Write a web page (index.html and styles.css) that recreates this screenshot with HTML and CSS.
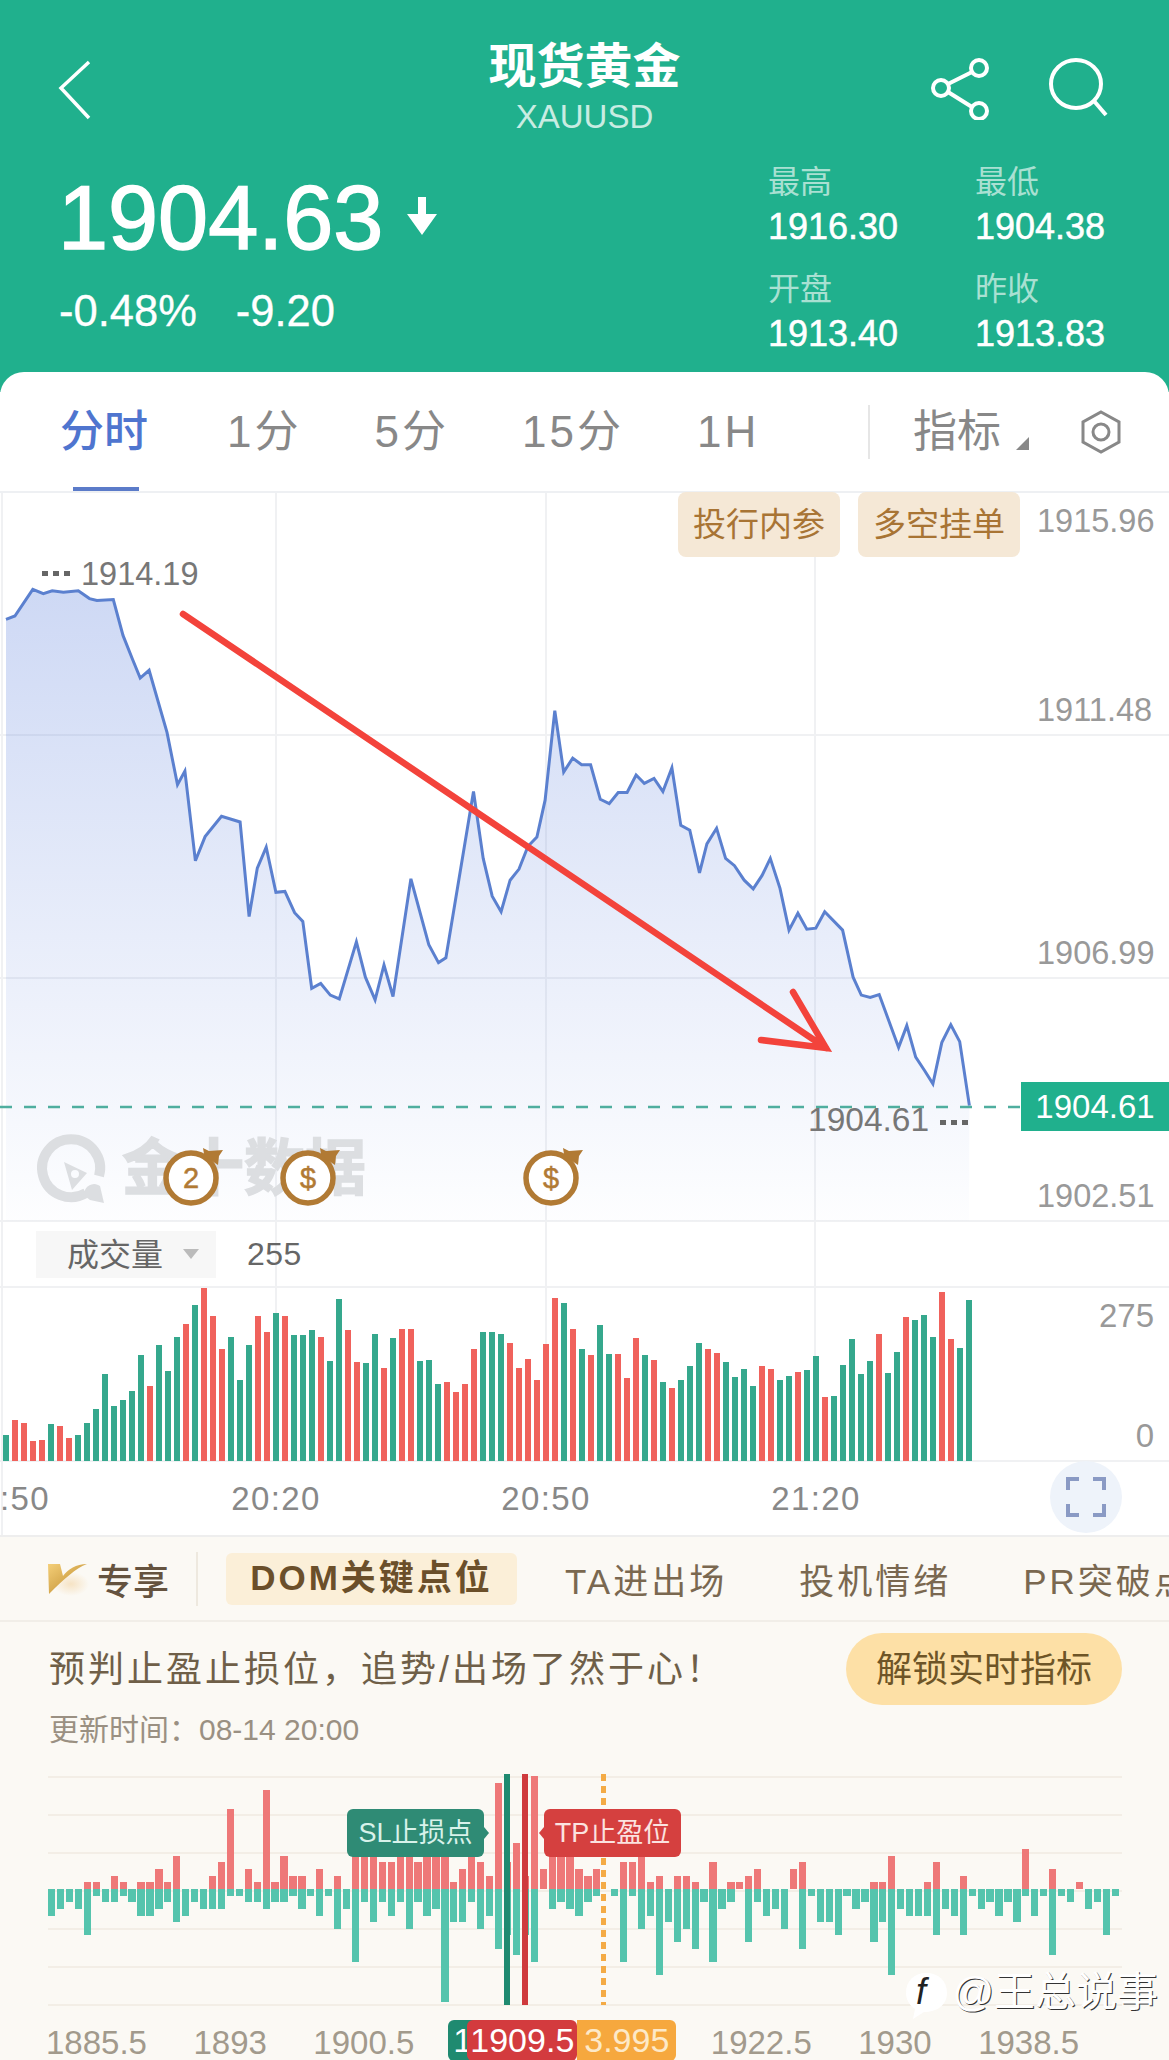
FILE: index.html
```html
<!DOCTYPE html>
<html lang="zh-CN">
<head>
    <meta charset="UTF-8">
    <title>现货黄金 XAUUSD</title>
    <link rel="stylesheet" href="styles.css">
</head>
<body>

<div class="page">
    <!-- Cabecalho verde -->
    <header class="header">
        <div class="topbar">
            <svg class="icon-back" width="40" height="64" viewBox="0 0 40 64"><path d="M34 4 L6 30 L34 60" /></svg>
            <div class="title-box">
                <div class="title">现货黄金</div>
                <div class="symbol">XAUUSD</div>
            </div>
            <div class="top-icons">
                <svg width="64" height="64" viewBox="0 0 64 64">
                    <circle cx="49" cy="12" r="8" />
                    <circle cx="11" cy="32" r="8" />
                    <circle cx="49" cy="55" r="8" />
                    <path d="M18 28 L42 16 M18 36 L42 51" />
                </svg>
                <svg width="64" height="64" viewBox="0 0 64 64">
                    <ellipse cx="28" cy="28" rx="25" ry="24" />
                    <path d="M46 45 L58 59" />
                </svg>
            </div>
        </div>
        <div class="quote">
            <div class="quote-left">
                <div class="price-row">
                    <span class="price">1904.63</span>
                    <svg class="price-arrow" width="30" height="38" viewBox="0 0 30 38"><path d="M11 0 H19 V17 H30 L15 38 L0 17 H11 Z" /></svg>
                </div>
                <div class="change-row">
                    <span>-0.48%</span>
                    <span>-9.20</span>
                </div>
            </div>
            <div class="stats">
                <div><div class="stat-label">最高</div><div class="stat-value">1916.30</div></div>
                <div><div class="stat-label">最低</div><div class="stat-value">1904.38</div></div>
                <div><div class="stat-label">开盘</div><div class="stat-value">1913.40</div></div>
                <div><div class="stat-label">昨收</div><div class="stat-value">1913.83</div></div>
            </div>
        </div>
    </header>

    <!-- Abas de periodo -->
    <section class="sheet">
        <nav class="tabs">
            <span class="tab tab-active">分时</span>
            <span class="tab">1分</span>
            <span class="tab">5分</span>
            <span class="tab">15分</span>
            <span class="tab">1H</span>
            <div class="tabs-right">
                <span class="tab-sep"></span>
                <span class="tab tab-ind">指标</span>
                <span class="tab-caret"></span>
                <svg class="icon-hex" width="42" height="44" viewBox="0 0 42 44">
                    <path d="M21 2 L39 12 V32 L21 42 L3 32 V12 Z" />
                    <circle cx="21" cy="22" r="8" />
                </svg>
            </div>
        </nav>

        <div class="chart">
            <svg class="chart-grid" width="1169" height="1042" viewBox="0 493 1169 1042">
                <path d="M0 735 H1169 M0 978 H1169 M0 1221 H1169 M0 1287 H1169 M0 1461 H1169" />
                <path d="M2 493 V1535 M276 493 V1461 M546 493 V1461 M815 493 V1461" />
            </svg>

            <div class="price-plot">
                <svg width="1169" height="728" viewBox="0 493 1169 728">
                    <defs>
                        <linearGradient id="area-fill" x1="0" y1="0" x2="0" y2="1">
                            <stop offset="0" stop-color="#5b7fdc" stop-opacity="0.3" />
                            <stop offset="1" stop-color="#5b7fdc" stop-opacity="0.01" />
                        </linearGradient>
                    </defs>
                    <polygon id="price-area" fill="url(#area-fill)" />

                    <!-- marca d'agua -->
                    <path class="wm-ring" d="M86 1193 A29 29 0 1 1 99 1176" />
                    <path class="wm-rocket" fill-rule="evenodd" d="M64 1162 L87 1173 L72 1190 Z M75 1170 A4 4 0 1 0 75 1178 A4 4 0 1 0 75 1170 Z" />
                    <path class="wm-rocket" d="M85 1190 A10 10 0 0 1 100 1186 L104 1203 L90 1200 A10 10 0 0 1 85 1190 Z" />
                    <text class="wm-text" x="122" y="1190">金十数据</text>

                    <polyline id="price-line" class="price-line" />
                    <path class="last-line" d="M0 1107 H1020" />

                    <g class="label-dots">
                        <rect x="42" y="571" width="6" height="5" /><rect x="53" y="571" width="6" height="5" /><rect x="64" y="571" width="6" height="5" />
                        <rect x="940" y="1120" width="6" height="5" /><rect x="951" y="1120" width="6" height="5" /><rect x="962" y="1120" width="6" height="5" />
                    </g>
                    <text class="axis-dark" x="81" y="585">1914.19</text>
                    <text class="axis-dark axis-last" x="808" y="1131">1904.61</text>

                    <text class="axis" x="1037" y="532">1915.96</text>
                    <text class="axis" x="1037" y="721">1911.48</text>
                    <text class="axis" x="1037" y="964">1906.99</text>
                    <text class="axis" x="1037" y="1207">1902.51</text>

                    <!-- seta desenhada por cima -->
                    <path class="red-arrow" d="M183 614 L826 1048 M793 992 L826 1048 L761 1040" />

                    <g class="bomb">
                        <circle cx="191" cy="1178" r="25" />
                        <path class="bomb-fuse" d="M204 1154 L203 1148 L209 1151 L223 1150 L219 1156 L218 1165 L212 1161 Z" />
                        <text x="191" y="1188">2</text>
                    </g>
                    <g class="bomb">
                        <circle cx="308" cy="1178" r="25" />
                        <path class="bomb-fuse" d="M321 1154 L320 1148 L326 1151 L340 1150 L336 1156 L335 1165 L329 1161 Z" />
                        <text x="308" y="1188">$</text>
                    </g>
                    <g class="bomb">
                        <circle cx="551" cy="1178" r="25" />
                        <path class="bomb-fuse" d="M564 1154 L563 1148 L569 1151 L583 1150 L579 1156 L578 1165 L572 1161 Z" />
                        <text x="551" y="1188">$</text>
                    </g>
                </svg>
                <div class="plot-chips">
                    <span class="plot-chip">投行内参</span>
                    <span class="plot-chip">多空挂单</span>
                </div>
                <div class="last-tag">1904.61</div>
            </div>

            <div class="vol-head">
                <div class="vol-select"><span class="vol-name">成交量</span><span class="vol-caret"></span></div>
                <span class="vol-value">255</span>
            </div>

            <div class="vol-plot">
                <div class="vol-bars" id="vol-bars"></div>
                <div class="vol-axis">
                    <span>275</span>
                    <span>0</span>
                </div>
            </div>

            <div class="time-axis">
                <span class="time-label time-first">:50</span>
                <span class="time-label">20:20</span>
                <span class="time-label">20:50</span>
                <span class="time-label">21:20</span>
                <div class="btn-full">
                    <svg width="40" height="40" viewBox="0 0 40 40"><path d="M2 13 V2 H13 M27 2 H38 V13 M2 27 V38 H13 M38 27 V38 H27" /></svg>
                </div>
            </div>
        </div>
    </section>

    <!-- Area exclusiva -->
    <section class="vip">
        <nav class="vip-tabs">
            <svg class="vip-logo" width="44" height="34" viewBox="0 0 44 34">
                <defs>
                    <linearGradient id="gold" x1="0" y1="0" x2="1" y2="1">
                        <stop offset="0" stop-color="#f4cf78" />
                        <stop offset="1" stop-color="#b98528" />
                    </linearGradient>
                    <radialGradient id="glow">
                        <stop offset="0" stop-color="#f6e3c4" />
                        <stop offset="1" stop-color="#fbf9f4" />
                    </radialGradient>
                </defs>
                <ellipse cx="26" cy="22" rx="18" ry="12" fill="url(#glow)" />
                <path fill="url(#gold)" d="M3 2 H15 L18 14 C23 7 31 2 42 2 C31 6 19 17 4 32 Z" />
            </svg>
            <span class="vip-name">专享</span>
            <span class="vip-sep"></span>
            <span class="vip-tab vip-tab-active">DOM关键点位</span>
            <span class="vip-tab">TA进出场</span>
            <span class="vip-tab">投机情绪</span>
            <span class="vip-tab">PR突破点</span>
        </nav>

        <div class="promo">
            <span class="promo-text">预判止盈止损位，追势/出场了然于心！</span>
            <button class="btn-unlock">解锁实时指标</button>
        </div>
        <div class="updated">更新时间：08-14 20:00</div>

        <div class="dom">
            <div class="dom-grid"><i></i><i></i><i></i><i></i><i></i><i></i><i></i></div>
            <div class="dom-up" id="dom-up"></div>
            <div class="dom-down" id="dom-down"></div>
            <span class="dom-line dom-line-sl"></span>
            <span class="dom-line dom-line-tp"></span>
            <span class="dom-line-now"></span>
            <span class="dom-tag dom-tag-sl">SL止损点</span>
            <span class="dom-tag dom-tag-tp">TP止盈位</span>
        </div>

        <div class="dom-axis">
            <span>1885.5</span>
            <span>1893</span>
            <span>1900.5</span>
            <div class="dom-chip">
                <span class="chip-sl">1</span>
                <span class="chip-tp">1909.5</span>
                <span class="chip-now">3.995</span>
            </div>
            <span>1922.5</span>
            <span>1930</span>
            <span>1938.5</span>
        </div>

        <div class="credit">
            <svg width="46" height="50" viewBox="0 0 46 50">
                <path class="credit-blob" d="M22 2 C35 2 43 10 43 22 C43 34 33 41 20 41 L9 48 L11 38 C5 34 2 28 2 22 C2 10 10 2 22 2 Z" />
                <text x="12" y="33">f</text>
            </svg>
            <span class="credit-name">@王总说事</span>
        </div>
    </section>
</div>

<script src="chart.js"></script>
</body>
</html>
```

FILE: styles.css
```css
* {
    box-sizing: border-box;
}
body {
    margin: 0;
    background-color: #fff;
    font-family: "Liberation Sans", "Noto Sans CJK SC", sans-serif;
    overflow: hidden;
}
.page {
    width: 1169px;
    height: 2060px;
    overflow: hidden;
    position: relative;
}

/* Cabecalho */
.header {
    height: 392px;
    background-color: #20b08d;
    color: #fff;
}
.topbar {
    height: 142px;
    padding: 38px 57px 0 55px;
    display: flex;
    justify-content: space-between;
    position: relative;
}
.icon-back {
    margin-top: 20px;
}
.icon-back path {
    fill: none;
    stroke: #fff;
    stroke-width: 3.5;
}
.title-box {
    text-align: center;
    position: absolute;
    left: 0;
    right: 0;
    top: 40px;
}
.title {
    font-size: 48px;
    font-weight: 700;
    line-height: 54px;
}
.symbol {
    font-size: 33px;
    line-height: 46px;
    color: #c8ece2;
}
.top-icons {
    display: flex;
    gap: 54px;
    margin-top: 18px;
}
.top-icons svg {
    fill: none;
    stroke: #fff;
    stroke-width: 4;
}
.quote {
    display: flex;
    justify-content: space-between;
}
.quote-left {
    padding: 26px 0 0 58px;
}
.price-row {
    display: flex;
    align-items: center;
    height: 100px;
}
.price {
    font-size: 90px;
    line-height: 100px;
    -webkit-text-stroke: 1.5px #fff;
}
.price-arrow {
    fill: #fff;
    margin-left: 24px;
    margin-top: -4px;
}
.change-row {
    display: flex;
    gap: 39px;
    font-size: 43.5px;
    line-height: 44px;
    margin-top: 21px;
    margin-left: 1px;
    -webkit-text-stroke: 0.3px #fff;
}
.stats {
    width: 401px;
    padding-top: 18px;
    display: grid;
    grid-template-columns: 207px 194px;
    row-gap: 17px;
}
.stat-label {
    font-size: 32px;
    line-height: 44px;
    color: #a9e0d2;
}
.stat-value {
    font-size: 36px;
    line-height: 46px;
    -webkit-text-stroke: 0.5px #fff;
}

/* Abas */
.sheet {
    margin-top: -20px;
    background-color: #fff;
    border-radius: 24px 24px 0 0;
    position: relative;
}
.tabs {
    height: 121px;
    padding: 1px 47px 0 60px;
    display: flex;
    align-items: center;
    gap: 73px;
    border-bottom: 2px solid #eef0f3;
}
.tab {
    font-size: 44px;
    line-height: 50px;
    letter-spacing: 3px;
    color: #888;
    position: relative;
}
.tab-active {
    color: #4f75cf;
    font-weight: 500;
    letter-spacing: 0;
    margin-right: 6px;
}
.tab-active::after {
    content: "";
    position: absolute;
    left: 13px;
    bottom: -34px;
    width: 66px;
    height: 4px;
    background-color: #5b7bc9;
}
.tabs-right {
    margin-left: auto;
    display: flex;
    align-items: center;
}
.tab-sep {
    width: 2px;
    height: 54px;
    background-color: #e6e6e6;
}
.tab-ind {
    margin-left: 43px;
    letter-spacing: 0;
}
.tab-caret {
    width: 0;
    height: 0;
    margin: 22px 0 0 15px;
    border-left: 13px solid transparent;
    border-bottom: 13px solid #888;
}
.icon-hex {
    margin-left: 51px;
    fill: none;
    stroke: #888;
    stroke-width: 3;
}

/* Grafico */
.chart {
    position: relative;
    height: 1042px;
}
.chart-grid {
    position: absolute;
    left: 0;
    top: 0;
    fill: none;
    stroke: #f0f1f3;
    stroke-width: 2;
}
.price-plot {
    position: relative;
    height: 728px;
}
.price-plot svg {
    display: block;
}
.price-line {
    fill: none;
    stroke: #5b80cf;
    stroke-width: 3;
}
.last-line {
    fill: none;
    stroke: #4fae9f;
    stroke-width: 2.5;
    stroke-dasharray: 12 12;
}
.label-dots {
    fill: #666;
}
.axis, .axis-dark {
    font-size: 32.5px;
}
.axis {
    fill: #999;
}
.axis-dark {
    fill: #777;
}
.axis-last {
    font-size: 33.5px;
}
.wm-ring {
    fill: none;
    stroke: #dcdee1;
    stroke-width: 10;
}
.wm-rocket {
    fill: #dcdee1;
}
.wm-text {
    font-size: 61px;
    font-weight: 700;
    fill: #dcdee1;
    stroke: #dcdee1;
    stroke-width: 1.5;
}
.red-arrow {
    fill: none;
    stroke: #f3433b;
    stroke-width: 6.5;
    stroke-linecap: round;
    stroke-linejoin: miter;
}
.bomb circle {
    fill: #fff;
    stroke: #b17a34;
    stroke-width: 5.5;
}
.bomb-fuse {
    fill: #b17a34;
}
.bomb text {
    font-size: 29px;
    fill: #b17a34;
    text-anchor: middle;
    stroke: #b17a34;
    stroke-width: 0.5;
}
.plot-chips {
    position: absolute;
    top: -1px;
    right: 149px;
    display: flex;
    gap: 18px;
}
.plot-chip {
    width: 162px;
    height: 65px;
    line-height: 65px;
    text-align: center;
    font-size: 33px;
    color: #a87434;
    background-color: #f5e8d6;
    border-radius: 8px;
}
.last-tag {
    position: absolute;
    left: 1021px;
    top: 589px;
    width: 148px;
    height: 49px;
    line-height: 49px;
    text-align: center;
    font-size: 33px;
    color: #fff;
    background-color: #20b08d;
}
.vol-head {
    height: 66px;
    padding-left: 36px;
    display: flex;
    align-items: center;
    gap: 31px;
    position: relative;
}
.vol-select {
    width: 180px;
    height: 47px;
    padding-left: 31px;
    display: flex;
    align-items: center;
    font-size: 32px;
    color: #666;
    background-color: #f7f7f7;
}
.vol-name {
    margin-top: -4px;
}
.vol-caret {
    width: 0;
    height: 0;
    margin-left: 20px;
    border-left: 8px solid transparent;
    border-right: 8px solid transparent;
    border-top: 10px solid #bbb;
}
.vol-value {
    font-size: 32px;
    letter-spacing: 0.5px;
    color: #666;
}
.vol-plot {
    height: 174px;
    display: flex;
    justify-content: space-between;
    position: relative;
}
.vol-bars {
    display: flex;
    align-items: flex-end;
    gap: 3px;
    padding-left: 3px;
}
.vol-bar {
    width: 6px;
}
.bar-up {
    background-color: #f0625c;
}
.bar-down {
    background-color: #35a88d;
}
.vol-axis {
    display: flex;
    flex-direction: column;
    gap: 80px;
    padding: 9px 15px 0 0;
    font-size: 33px;
    line-height: 40px;
    color: #999;
    text-align: right;
}
.time-axis {
    height: 74px;
    display: flex;
    align-items: center;
    position: relative;
}
.time-label {
    flex: 0 0 270px;
    text-align: center;
    font-size: 33px;
    letter-spacing: 1.4px;
    color: #888;
    padding-top: 2px;
}
.time-first {
    flex-basis: 141px;
    text-align: left;
}
.btn-full {
    flex: 0 0 72px;
    height: 72px;
    margin: -2px 47px 0 auto;
    border-radius: 50%;
    background-color: #eef3fa;
    display: flex;
    align-items: center;
    justify-content: center;
}
.btn-full path {
    fill: none;
    stroke: #8a9ac4;
    stroke-width: 4;
}

/* Area exclusiva */
.vip {
    height: 525px;
    background-color: #fbf9f4;
    border-top: 2px solid #eeeeee;
    position: relative;
}
.vip-tabs {
    height: 85px;
    padding-left: 45px;
    display: flex;
    align-items: center;
    white-space: nowrap;
    border-bottom: 2px solid #f1eee8;
}
.vip-logo {
    flex: none;
    margin-right: 8px;
}
.vip-name {
    flex: none;
    font-size: 36px;
    font-weight: 500;
    color: #65533f;
}
.vip-sep {
    flex: none;
    width: 2px;
    height: 54px;
    margin: 0 28px 0 27px;
    background-color: #eee9df;
}
.vip-tab {
    flex: none;
    font-size: 35px;
    letter-spacing: 3px;
    color: #7a6850;
    margin-right: 72px;
}
.vip-tab-active {
    width: 291px;
    height: 52px;
    line-height: 50px;
    text-align: center;
    font-weight: 700;
    color: #6b4f2a;
    background-color: #fbefd8;
    border-radius: 6px;
    margin-right: 48px;
}
.promo {
    height: 72px;
    margin-top: 11px;
    padding: 0 47px 0 49px;
    display: flex;
    align-items: center;
    justify-content: space-between;
}
.promo-text {
    font-size: 36px;
    letter-spacing: 3px;
    color: #6f5f48;
    margin-top: -6px;
}
.btn-unlock {
    width: 276px;
    height: 72px;
    padding: 0 0 6px;
    border: none;
    border-radius: 36px;
    font-family: inherit;
    font-size: 36px;
    color: #6e5527;
    background-color: #fde0a6;
}
.updated {
    height: 40px;
    line-height: 40px;
    margin-top: 5px;
    padding-left: 49px;
    font-size: 30px;
    color: #9a9082;
}
.dom {
    position: relative;
    width: 1074px;
    height: 230px;
    margin: 26px 0 0 48px;
}
.dom-grid {
    position: absolute;
    left: 0;
    top: 0;
    width: 100%;
    height: 100%;
    display: flex;
    flex-direction: column;
    justify-content: space-between;
}
.dom-grid i {
    display: block;
    height: 2px;
    background-color: #f3eee6;
}
.dom-up, .dom-down {
    position: relative;
    display: flex;
    gap: 1.65px;
}
.dom-up {
    height: 113px;
    align-items: flex-end;
}
.dom-down {
    height: 117px;
    align-items: flex-start;
}
.dom-bar {
    flex: 0 0 7.3px;
}
.dom-up .dom-bar {
    background-color: #ee7878;
}
.dom-down .dom-bar {
    background-color: #55c4ad;
}
.dom-line {
    position: absolute;
    top: -2px;
    width: 6px;
    height: 231px;
}
.dom-line-sl {
    left: 456px;
    background-color: #1f8a70;
}
.dom-line-tp {
    left: 474px;
    background-color: #cf3a3d;
}
.dom-line-now {
    position: absolute;
    left: 553px;
    top: -2px;
    width: 5px;
    height: 231px;
    background-image: linear-gradient(#f4ab45 7px, transparent 7px);
    background-size: 5px 12px;
}
.dom-tag {
    position: absolute;
    top: 33px;
    width: 137px;
    height: 48px;
    line-height: 48px;
    text-align: center;
    font-size: 27px;
    border-radius: 6px;
}
.dom-tag::after {
    content: "";
    position: absolute;
    top: 18px;
    border-top: 6px solid transparent;
    border-bottom: 6px solid transparent;
}
.dom-tag-sl {
    left: 299px;
    color: #d8f2ea;
    background-color: #2f8b75;
}
.dom-tag-sl::after {
    left: 137px;
    border-left: 5px solid #2f8b75;
}
.dom-tag-tp {
    left: 496px;
    color: #fbe3e0;
    background-color: #d5403f;
}
.dom-tag-tp::after {
    right: 137px;
    border-right: 5px solid #d5403f;
}
.dom-axis {
    height: 41px;
    margin-top: 14px;
    padding: 0 0 0 46px;
    display: flex;
    align-items: center;
    gap: 46.5px;
    font-size: 33px;
    color: #a29a8c;
}
.dom-axis > span {
    padding-top: 4px;
}
.dom-chip {
    display: flex;
    height: 41px;
    line-height: 41px;
    font-size: 34px;
    color: #fff;
    margin: 0 -12px 0 -12.5px;
}
.chip-sl {
    width: 34px;
    padding-left: 5px;
    border-radius: 6px 0 0 6px;
    background-color: #1f8a70;
}
.chip-tp {
    width: 110px;
    margin-left: -15px;
    text-align: center;
    border-radius: 6px;
    background-color: #d33b3e;
    position: relative;
}
.chip-now {
    width: 99px;
    text-align: center;
    color: #fde9c8;
    border-radius: 0 6px 6px 0;
    background-color: #f6a83e;
}
.credit {
    position: absolute;
    right: 11px;
    top: 434px;
    display: flex;
    align-items: center;
    gap: 2px;
}
.credit-blob {
    fill: #fff;
}
.credit text {
    font-size: 36px;
    font-style: italic;
    fill: #222;
}
.credit-name {
    font-size: 41px;
    line-height: 44px;
    margin-top: -8px;
    color: #fff;
    text-shadow: 1px 1px 0 #333;
}
```

FILE: chart.js
```js
// Pontos do preco, medidos no recorte (x * 0.7457, y / 2.063)
const precos = [
    [8,267],[20,260],[44,205],[58,214],[70,208],[85,211],[105,208],[120,224],[130,228],[152,226],
    [165,300],[178,350],[188,388],[200,372],[224,500],[238,608],[248,580],[262,765],[275,715],[297,673],
    [322,685],[334,880],[345,780],[357,737],[370,830],[382,828],[395,872],[406,890],[418,1028],[430,1018],
    [443,1042],[455,1050],[478,932],[490,1005],[503,1052],[515,980],[527,1045],[551,802],[575,938],[588,975],
    [598,965],[635,622],[648,760],[660,838],[672,870],[684,805],[696,782],[708,735],[720,716],[731,640],
    [744,455],[756,582],[768,553],[780,567],[792,567],[805,638],[817,647],[829,624],[841,624],[853,588],
    [864,605],[877,595],[889,622],[901,573],[913,692],[925,702],[938,790],[948,730],[961,698],[973,760],
    [985,775],[998,805],[1010,823],[1022,795],[1033,760],[1046,822],[1058,908],[1070,873],[1082,906],[1094,904],
    [1106,870],[1130,908],[1144,1005],[1155,1042],[1167,1047],[1179,1041],[1205,1150],[1216,1105],[1228,1170],[1240,1198],
    [1251,1225],[1263,1140],[1275,1103],[1287,1138],[1300,1270]
];
const pontos = precos.map(p => (p[0] * 0.7457).toFixed(1) + ',' + (490 + p[1] / 2.063).toFixed(1));
document.getElementById('price-line').setAttribute('points', pontos.join(' '));
document.getElementById('price-area').setAttribute('points', pontos.join(' ') + ' 969,1221 6,1221');

// Volume: topo da barra no recorte, positivo = verde, negativo = vermelho
const topos = [
    1003,-960,-968,-1023,-1020,972,-977,-1014,1005,969,927,820,918,900,872,764,-856,733,812,711,
    -671,614,-563,-648,-745,711,840,733,-647,-694,637,-648,705,705,690,-711,781,597,-690,-785,
    789,702,-802,712,-685,-685,781,778,852,-844,-876,-852,-747,696,696,700,-728,-802,-776,-838,
    -732,-593,609,-685,745,-765,673,762,-762,-834,-712,764,-779,846,-863,840,798,727,-747,-758,
    785,830,805,857,-797,-805,840,828,-816,808,768,-889,888,795,715,821,781,-702,817,755,
    -650,658,643,711,-576,-715,744,599
];
const volBars = document.getElementById('vol-bars');
topos.forEach(t => {
    const bar = document.createElement('div');
    bar.className = 'vol-bar ' + (t < 0 ? 'bar-up' : 'bar-down');
    bar.style.height = ((1082 - Math.abs(t)) / 3).toFixed(1) + 'px';
    volBars.appendChild(bar);
});

// Barras DOM, em unidades de 6.63px: [verde, vermelho]
const dom = [
    [4,0],[3,0],[2,0],[3,0],[7,1],[1,1],[2,0],[2,2],[1,1],[2,0],[4,1],[4,1],[3,3],[2,1],[5,5],[4,0],[2,0],[3,0],[3,2],[3,4],
    [1,12],[1,0],[2,3],[2,1],[3,15],[2,1],[2,5],[1,2],[3,2],[1,0],[4,3],[1,0],[6,2],[3,0],[11,6],[2,5],[5,5],[2,4],[4,4],[2,5],
    [6,5],[2,4],[4,5],[3,5],[17,5],[5,1],[5,3],[2,5],[6,4],[4,2],[9,16],[7,4],[10,7],[7,2],[11,17],[0,3],[3,5],[2,5],[3,5],[4,3],
    [2,2],[1,3],[0,0],[1,0],[11,4],[1,4],[6,6],[4,1],[13,2],[5,0],[8,2],[6,2],[9,1],[2,0],[11,4],[3,0],[2,1],[0,1],[8,2],[2,3],
    [4,0],[3,0],[6,0],[0,3],[9,4],[1,0],[5,0],[5,0],[7,0],[1,0],[3,0],[2,0],[8,1],[5,1],[13,5],[3,0],[4,0],[4,0],[4,1],[7,4],
    [3,0],[4,0],[7,2],[1,0],[3,0],[2,0],[4,0],[2,0],[5,0],[1,6],[4,0],[1,0],[10,3],[1,0],[2,0],[0,1],[3,0],[2,0],[7,0],[1,0]
];
const domUp = document.getElementById('dom-up');
const domDown = document.getElementById('dom-down');
dom.forEach(d => {
    const baixo = document.createElement('div');
    baixo.className = 'dom-bar';
    baixo.style.height = (d[0] * 6.63) + 'px';
    domDown.appendChild(baixo);

    const cima = document.createElement('div');
    cima.className = 'dom-bar';
    cima.style.height = (d[1] * 6.63) + 'px';
    domUp.appendChild(cima);
});
```
